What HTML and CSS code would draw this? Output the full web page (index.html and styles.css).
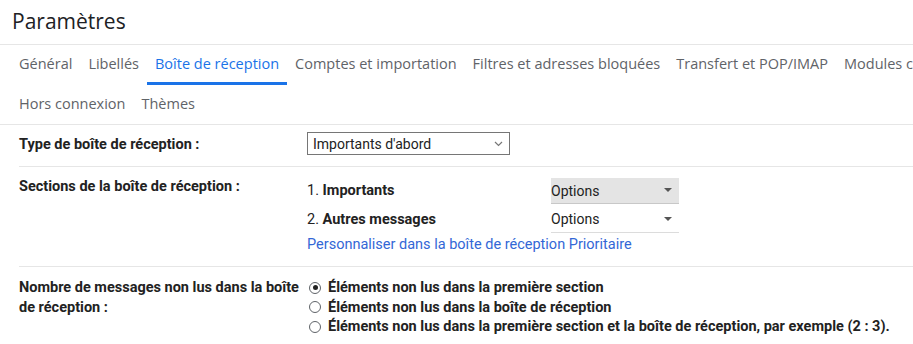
FILE: index.html
```html
<!DOCTYPE html>
<html lang="fr">
<head>
    <meta charset="UTF-8">
    <meta name="viewport" content="width=device-width, initial-scale=1.0">
    <title>Paramètres</title>
    <link rel="stylesheet" href="styles.css">
</head>
<body>
    <h1 class="page-title">Paramètres</h1>

    <nav class="tabs">
        <div class="tab-row">
            <a class="tab">Général</a>
            <a class="tab">Libellés</a>
            <a class="tab active">Boîte de réception</a>
            <a class="tab">Comptes et importation</a>
            <a class="tab">Filtres et adresses bloquées</a>
            <a class="tab">Transfert et POP/IMAP</a>
            <a class="tab">Modules complémentaires</a>
        </div>
        <div class="tab-row second">
            <a class="tab">Hors connexion</a>
            <a class="tab">Thèmes</a>
        </div>
    </nav>

    <div class="settings">
        <div class="setting">
            <div class="setting-label">Type de boîte de réception :</div>
            <div class="setting-value">
                <div class="select">
                    <span>Importants d'abord</span>
                    <svg width="9" height="6" viewBox="0 0 9 6"><path d="M1 1l3.5 3.5L8 1" fill="none" stroke="#777" stroke-width="1.2"/></svg>
                </div>
            </div>
        </div>

        <div class="setting">
            <div class="setting-label">Sections de la boîte de réception :</div>
            <div class="setting-value">
                <div class="sections">
                    <div class="section-name"><span>1. <b>Importants</b></span></div>
                    <div class="section-options hover">
                        <span>Options</span>
                        <svg width="8" height="5" viewBox="0 0 8 5"><path d="M0 0h8L4 4z" fill="#555"/></svg>
                    </div>
                    <div class="section-name tall"><span>2. <b>Autres messages</b></span></div>
                    <div class="section-options tall">
                        <span>Options</span>
                        <svg width="8" height="5" viewBox="0 0 8 5"><path d="M0 0h8L4 4z" fill="#555"/></svg>
                    </div>
                </div>
                <a class="link">Personnaliser dans la boîte de réception Prioritaire</a>
            </div>
        </div>

        <div class="setting last">
            <div class="setting-label">Nombre de messages non lus dans la boîte de réception :</div>
            <div class="setting-value">
                <label class="radio-line"><span class="radio checked"></span>Éléments non lus dans la première section</label>
                <label class="radio-line"><span class="radio"></span>Éléments non lus dans la boîte de réception</label>
                <label class="radio-line"><span class="radio"></span>Éléments non lus dans la première section et la boîte de réception, par exemple (2 : 3).</label>
            </div>
        </div>
    </div>
</body>
</html>
```

FILE: styles.css
```css
:root {
    --text-dark: #202124;
    --text-tab: #5f6368;
    --blue: #1a73e8;
    --link: #3367d6;
    --divider: #e6e6e6;
}

* {
    margin: 0;
    padding: 0;
    box-sizing: border-box;
}

body {
    font-family: Roboto, "Liberation Sans", Arial, sans-serif;
    font-size: 14.5px;
    color: #222;
    background: #fff;
    overflow: hidden;
}

.page-title {
    height: 45px;
    padding-left: 12px;
    font-family: "Open Sans", sans-serif;
    font-size: 21px;
    font-weight: 400;
    line-height: 42px;
    color: var(--text-dark);
    border-bottom: 1px solid var(--divider);
}

.tabs {
    padding-left: 11px;
    border-bottom: 1px solid var(--divider);
}

.tab-row {
    display: flex;
    height: 40px;
    white-space: nowrap;
    overflow: hidden;
}

.tab-row.second {
    height: 39px;
}

.tab {
    display: flex;
    align-items: center;
    padding: 0 8px;
    border-bottom: 3px solid transparent;
    font-family: "Open Sans", sans-serif;
    font-size: 14.5px;
    font-weight: 500;
    color: var(--text-tab);
    cursor: pointer;
}

.tab.active {
    color: var(--blue);
    border-bottom-color: var(--blue);
}

.settings {
    margin-left: 19px;
}

.setting {
    display: grid;
    grid-template-columns: 288px 1fr;
    padding: 10px 0 11px;
    border-bottom: 1px solid var(--divider);
    line-height: 20px;
}

.setting.last {
    border-bottom: none;
    padding-top: 11px;
    line-height: 19.5px;
}

.setting-label {
    font-weight: 700;
    padding-right: 8px;
}

.select {
    display: flex;
    align-items: center;
    justify-content: space-between;
    width: 203px;
    height: 23px;
    margin-top: -3px;
    padding: 0 6px 0 5px;
    border: 1px solid #767676;
    font-size: 14px;
    color: #222;
}

.sections {
    display: grid;
    grid-template-columns: 244px 128px;
    margin-top: 1px;
}

.section-name {
    display: flex;
    align-items: center;
    height: 26px;
}

.section-options {
    display: flex;
    align-items: center;
    justify-content: space-between;
    height: 26px;
    padding-right: 7px;
    border-bottom: 1px solid #dcdcdc;
    font-size: 14px;
}

.section-options.hover {
    background: #e4e4e4;
    border-bottom-color: #c8c8c8;
}

.section-name.tall,
.section-options.tall {
    height: 29px;
    padding-top: 2px;
}

.link {
    display: block;
    padding-top: 2px;
    color: var(--link);
    cursor: pointer;
}

.radio-line {
    display: flex;
    align-items: center;
    font-weight: 700;
    cursor: pointer;
}

.radio {
    position: relative;
    width: 12px;
    height: 12px;
    margin: 0 7px 0 2px;
    border: 1px solid #5f6368;
    border-radius: 50%;
}

.radio.checked::after {
    content: "";
    position: absolute;
    top: 2.5px;
    left: 2.5px;
    width: 5px;
    height: 5px;
    border-radius: 50%;
    background: #222;
}
```
